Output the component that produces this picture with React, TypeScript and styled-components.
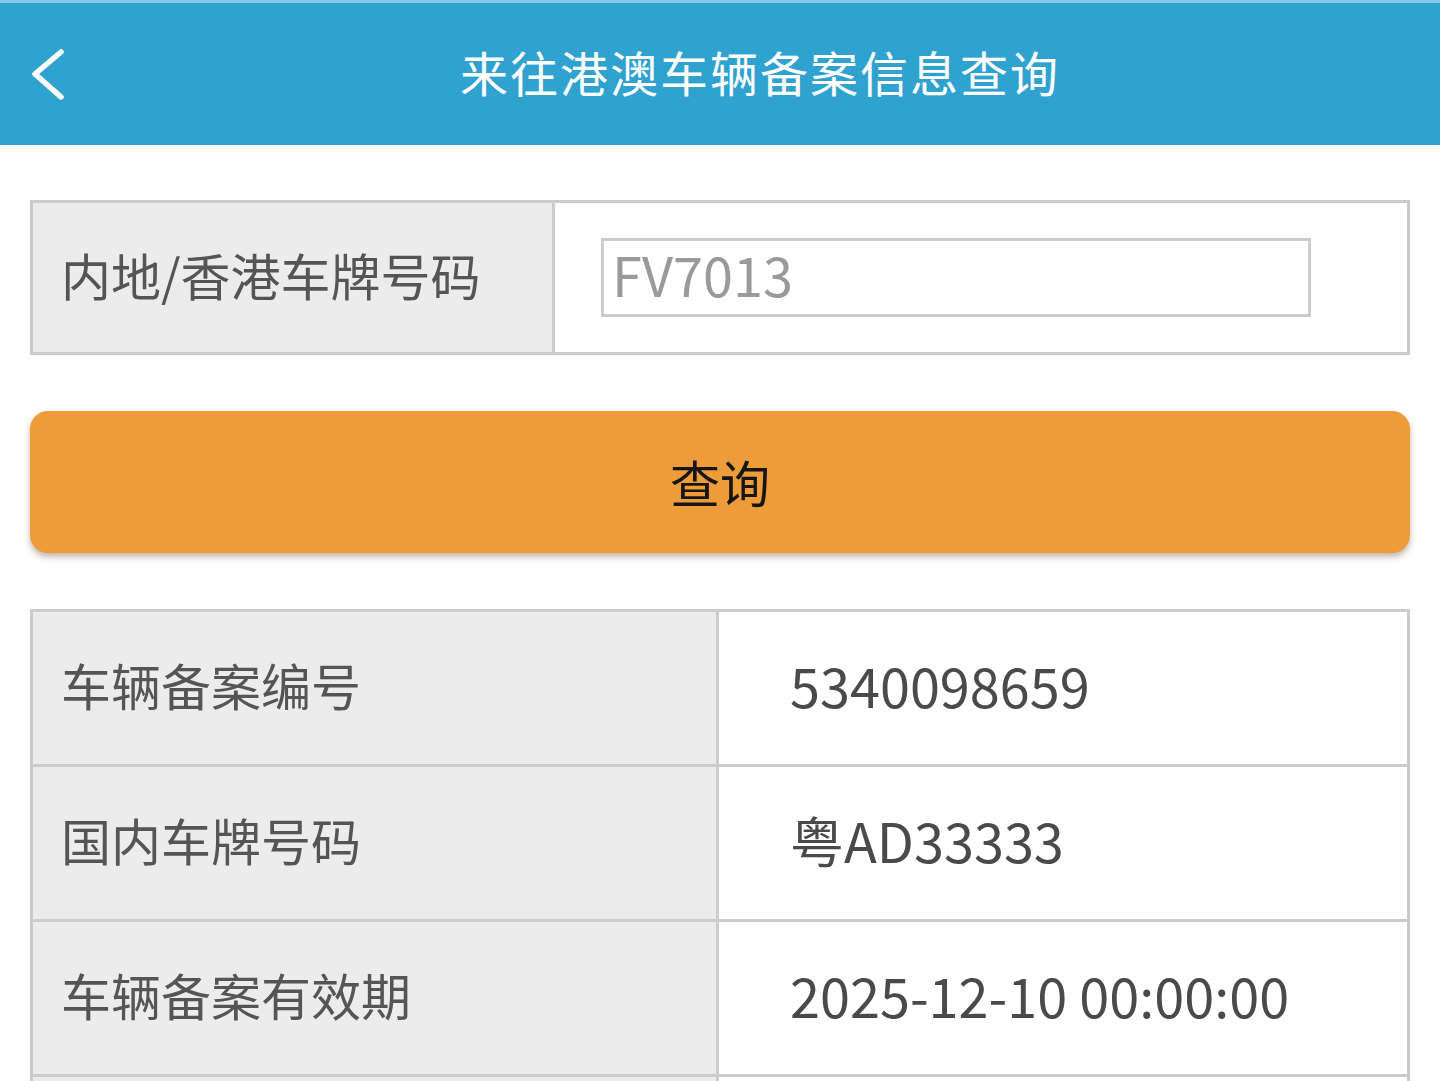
import styled, { createGlobalStyle } from 'styled-components';

const GlobalStyle = createGlobalStyle`
  html, body {
    margin: 0;
    padding: 0;
    background: #ffffff;
    font-family: "Noto Sans CJK SC", "Noto Sans", sans-serif;
  }
`;

const infoRows = [
  { label: '车辆备案编号', value: '5340098659' },
  { label: '国内车牌号码', value: '粤AD33333' },
  { label: '车辆备案有效期', value: '2025-12-10 00:00:00' },
  { label: '', value: '' },
];

const BackIcon = () => (
  <svg width="42" height="56" viewBox="0 0 42 56" fill="none">
    <path d="M33 5 L7 27 L33 50" stroke="#ffffff" strokeWidth="5.5" strokeLinecap="round" strokeLinejoin="round" />
  </svg>
);

const App = () => {
  return (
    <Page>
      <GlobalStyle />
      <Header>
        <BackButton>
          <BackIcon />
        </BackButton>
        <Title>来往港澳车辆备案信息查询</Title>
      </Header>
      <Content>
        <SearchTable>
          <LabelCell>内地/香港车牌号码</LabelCell>
          <InputCell>
            <PlateInput defaultValue="FV7013" />
          </InputCell>
        </SearchTable>
        <QueryButton>查询</QueryButton>
        <InfoTable>
          {infoRows.map((row, i) => (
            <InfoRow key={i} $last={i === infoRows.length - 1}>
              <InfoLabel>{row.label}</InfoLabel>
              <InfoValue>{row.value}</InfoValue>
            </InfoRow>
          ))}
        </InfoTable>
      </Content>
    </Page>
  );
};

export default App;

const Page = styled.div`
  width: 1440px;
  min-height: 1081px;
  background: #ffffff;
`;

const Header = styled.header`
  height: 145px;
  box-sizing: border-box;
  border-top: 3px solid #86c8e4;
  background: #30a2cf;
  display: flex;
  align-items: center;
  position: relative;
  padding-left: 80px;
`;

const BackButton = styled.div`
  position: absolute;
  left: 28px;
  top: 44px;
  width: 42px;
  height: 56px;
`;

const Title = styled.h1`
  flex: 1;
  margin: 0;
  margin-top: -6px;
  text-align: center;
  font-size: 48px;
  letter-spacing: 2px;
  font-weight: 400;
  color: #ffffff;
`;

const Content = styled.div`
  padding: 55px 30px 0;
  display: flex;
  flex-direction: column;
  gap: 56px;
`;

const SearchTable = styled.div`
  display: grid;
  grid-template-columns: 522px 1fr;
  height: 155px;
  box-sizing: border-box;
  border: 3px solid #cccccc;
`;

const LabelCell = styled.div`
  background: #ececec;
  border-right: 3px solid #cccccc;
  display: flex;
  align-items: center;
  padding-left: 28px;
  padding-bottom: 8px;
  font-size: 50px;
  color: #555555;
`;

const InputCell = styled.div`
  display: flex;
  align-items: center;
  padding-left: 46px;
  padding-right: 96px;
  background: #ffffff;
`;

const PlateInput = styled.input`
  width: 100%;
  height: 79px;
  box-sizing: border-box;
  border: 3px solid #cccccc;
  padding: 0 8px 8px;
  font-family: "Noto Sans CJK SC", "Noto Sans", sans-serif;
  font-size: 54px;
  color: #9a9a9a;
  outline: none;
  background: #ffffff;
`;

const QueryButton = styled.button`
  height: 142px;
  border: none;
  border-radius: 18px;
  background: #ee9b3a;
  box-shadow: 0 4px 6px rgba(80, 50, 20, 0.35);
  font-family: "Noto Sans CJK SC", "Noto Sans", sans-serif;
  font-size: 50px;
  color: #151515;
  padding-bottom: 4px;
  cursor: pointer;
`;

const InfoTable = styled.div`
  display: flex;
  flex-direction: column;
  border-top: 3px solid #cccccc;
  border-left: 3px solid #cccccc;
  border-right: 3px solid #cccccc;
`;

const InfoRow = styled.div<{ $last?: boolean }>`
  display: grid;
  grid-template-columns: 686px 1fr;
  height: ${(p) => (p.$last ? '152px' : '155px')};
  box-sizing: border-box;
  border-bottom: ${(p) => (p.$last ? 'none' : '3px solid #cccccc')};
`;

const InfoLabel = styled.div`
  background: #ececec;
  border-right: 3px solid #cccccc;
  display: flex;
  align-items: center;
  padding-left: 28px;
  padding-bottom: 8px;
  font-size: 50px;
  color: #555555;
`;

const InfoValue = styled.div`
  display: flex;
  align-items: center;
  padding-left: 71px;
  padding-bottom: 8px;
  font-size: 54px;
  color: #4a4a4a;
  background: #ffffff;
`;
